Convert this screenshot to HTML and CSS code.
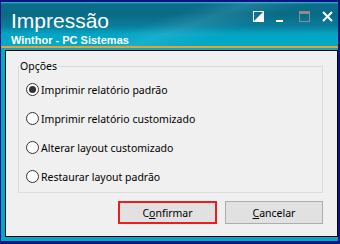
FILE: index.html
```html
<!DOCTYPE html>
<html lang="pt-BR">
<head>
<meta charset="utf-8">
<title>Impressão</title>
<link rel="stylesheet" href="styles.css">
</head>
<body>
<div class="window">
  <header class="titlebar">
    <div class="brand">
      <div class="title">Impressão</div>
      <div class="subtitle">Winthor - PC Sistemas</div>
    </div>
    <div class="controls">
      <svg class="ctl" width="11" height="11" viewBox="0 0 11 11">
        <rect x="0.5" y="0.5" width="10" height="10" fill="none" stroke="#fff" stroke-width="1"/>
        <polygon points="11,0 11,11 0,11" fill="#fff"/>
      </svg>
      <svg class="ctl" width="11" height="11" viewBox="0 0 11 11">
        <rect x="0" y="9" width="7" height="2" fill="#fff"/>
      </svg>
      <svg class="ctl" width="11" height="11" viewBox="0 0 11 11">
        <rect x="0.5" y="0.5" width="10" height="10" fill="none" stroke="#8c8c8c" stroke-width="1"/>
        <rect x="0" y="0" width="11" height="3" fill="#8c8c8c"/>
      </svg>
      <svg class="ctl" width="11" height="11" viewBox="0 0 11 11">
        <path d="M1 1 L10 10 M10 1 L1 10" stroke="#fff" stroke-width="2" fill="none"/>
      </svg>
    </div>
  </header>
  <div class="accent"></div>
  <div class="frame">
    <main class="client">
      <fieldset class="group">
        <legend class="legend">Opções</legend>
        <label class="option"><input type="radio" name="op" class="radio" checked><span>Imprimir relatório padrão</span></label>
        <label class="option"><input type="radio" name="op" class="radio"><span>Imprimir relatório customizado</span></label>
        <label class="option"><input type="radio" name="op" class="radio"><span>Alterar layout customizado</span></label>
        <label class="option"><input type="radio" name="op" class="radio"><span>Restaurar layout padrão</span></label>
      </fieldset>
      <div class="actions">
        <button class="btn btn-primary">C<u>o</u>nfirmar</button>
        <button class="btn"><u>C</u>ancelar</button>
      </div>
    </main>
  </div>
</div>
</body>
</html>
```

FILE: styles.css
```css
html, body {
  margin: 0;
  padding: 0;
}
body {
  width: 340px;
  height: 244px;
  overflow: hidden;
  font-family: "Noto Sans", "DejaVu Sans", sans-serif;
}
.window {
  box-sizing: border-box;
  width: 340px;
  height: 244px;
  background: #0a1482;
  padding: 2px 2px 3px 1px;
  display: flex;
  flex-direction: column;
}
.titlebar {
  height: 44px;
  flex: none;
  display: flex;
  padding-left: 10px;
  padding-right: 5px;
  background:
    linear-gradient(160deg, rgba(255,255,255,0) 45%, rgba(120,210,230,0.18) 55%, rgba(255,255,255,0) 68%),
    linear-gradient(to bottom, #3fb7d6 0px, #0a6e8a 2px, #096a86 12px, #0b7d9b 24px, #04a4c3 32px, #00aac9 44px);
  color: #fff;
}
.brand {
  display: flex;
  flex-direction: column;
  padding-top: 7px;
}
.title {
  font-family: "Liberation Sans", Arial, sans-serif;
  font-size: 21px;
  line-height: 24px;
}
.subtitle {
  margin-top: 1px;
  font-family: "Liberation Sans", Arial, sans-serif;
  font-weight: bold;
  font-size: 11px;
  line-height: 12px;
}
.controls {
  margin-left: auto;
  display: flex;
  gap: 12px;
  padding-top: 9px;
  align-items: flex-start;
}
.ctl {
  display: block;
}
.accent {
  height: 2px;
  flex: none;
  background: #f2a024;
}
.frame {
  flex: 1;
  display: flex;
  padding: 2px 0 4px 4px;
  background: linear-gradient(to bottom, #04a8c8, #00a8c8);
}
.client {
  flex: 1;
  box-sizing: border-box;
  border: 1px solid #000;
  background: #f0f0f0;
  display: flex;
  flex-direction: column;
  padding: 8px 14px 0 12px;
}
.group {
  margin: 0;
  padding: 10px 0 9px 0;
  border: 1px solid #dcdcdc;
  min-inline-size: 0;
  display: flex;
  flex-direction: column;
  gap: 16px;
}
.legend {
  padding: 0 1px;
  margin-left: 0;
  font-size: 10.5px;
  line-height: 14px;
  color: #000;
}
.option {
  display: flex;
  align-items: center;
  height: 13px;
  padding-left: 7px;
  font-size: 10.5px;
  color: #000;
}
.radio {
  appearance: none;
  -webkit-appearance: none;
  margin: 0 2px 0 0;
  width: 13px;
  height: 13px;
  box-sizing: border-box;
  border: 1px solid #333;
  border-radius: 50%;
  background: #fff;
  display: grid;
  place-items: center;
  flex: none;
}
.radio:checked::after {
  content: "";
  width: 7px;
  height: 7px;
  border-radius: 50%;
  background: #333;
}
.actions {
  display: flex;
  justify-content: flex-end;
  gap: 8px;
  margin-top: 8px;
}
.btn {
  box-sizing: border-box;
  width: 98px;
  height: 23px;
  margin: 0;
  padding: 0;
  border: 1px solid #adadad;
  background: #e1e1e1;
  font-family: "Noto Sans", "DejaVu Sans", sans-serif;
  font-size: 10.5px;
  color: #000;
}
.btn-primary {
  width: 99px;
  border: 2px solid #ec1c24;
}
```
